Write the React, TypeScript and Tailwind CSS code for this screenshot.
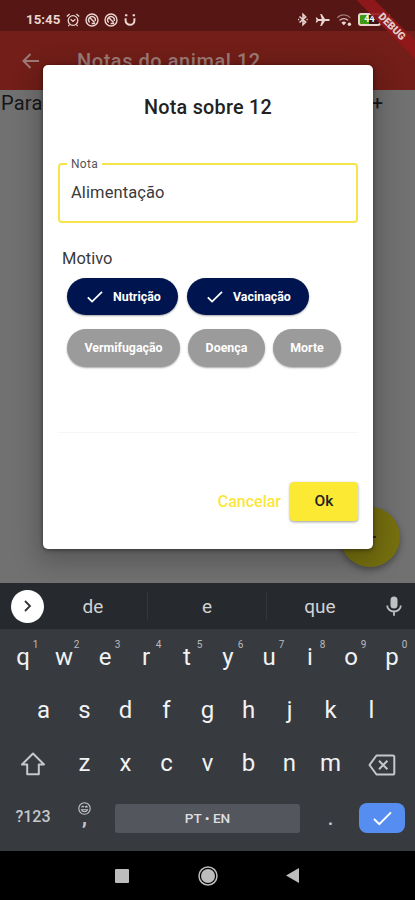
import { clsx } from "clsx";
import type { ReactNode } from "react";

interface Reason {
    label: string;
    selected: boolean;
    size: string;
}

const reasonRows: Reason[][] = [
    [
        { label: "Nutrição", selected: true, size: "w-[111px]" },
        { label: "Vacinação", selected: true, size: "w-[122px]" }
    ],
    [
        { label: "Vermifugação", selected: false, size: "w-[113px]" },
        { label: "Doença", selected: false, size: "w-[77px]" },
        { label: "Morte", selected: false, size: "w-[68px]" }
    ]
];

const topKeys = ["q", "w", "e", "r", "t", "y", "u", "i", "o", "p"];
const middleKeys = ["a", "s", "d", "f", "g", "h", "j", "k", "l"];
const bottomKeys = ["z", "x", "c", "v", "b", "n", "m"];

function NoSoundIcon() {
    return (
        <svg className="h-[14px] w-[14px]" viewBox="0 0 14 14" fill="none" stroke="currentColor">
            <circle cx="7" cy="7" r="6" strokeWidth="1.4" />
            <path d="M4.6 9.4A3.4 3.4 0 1 1 10.2 8M5.2 5l4.4 4.4M6.6 10.5h3.6" strokeWidth="1.4" />
        </svg>
    );
}

function StatusBar() {
    return (
        <div className="flex h-[31px] items-center bg-[#551614] pt-[8px] pl-[26px] text-[#ead5d0]">
            <span className="w-[40px] text-[13.3px] leading-none font-bold">15:45</span>
            <div className="flex items-center gap-[5px]">
                <svg className="h-[14px] w-[14px]" viewBox="0 0 14 14" fill="none" stroke="currentColor" strokeWidth="1.3">
                    <circle cx="7" cy="7.5" r="4.8" />
                    <path d="M.8 3.4 3.6 1M13.2 3.4 10.4 1M4.6 6.3 7 8.4l2.4-2.1M3.6 11.5l-1.2 1.7M10.4 11.5l1.2 1.7" />
                </svg>
                <NoSoundIcon />
                <NoSoundIcon />
                <svg className="h-[14px] w-[14px]" viewBox="0 0 14 14" fill="none" stroke="currentColor" strokeWidth="2">
                    <path d="M2.6 5.2v2.2a4.4 4.4 0 0 0 8.8 0V5.2" />
                    <path d="M2 2.3h2.4M9.6 2.3H12" />
                </svg>
            </div>
            <div className="ml-[160px] flex items-center">
                <svg className="h-[15px] w-[12px]" viewBox="0 0 12 15" fill="none" stroke="currentColor" strokeWidth="1.5">
                    <path d="m2.5 4.5 6.2 5.6L6 12.7V2.3l2.7 2.6-6.2 5.6" />
                    <path d="M1 7.5h1.2M9.5 7.5h1.2" />
                </svg>
                <svg className="ml-[6px] h-[14px] w-[15px]" viewBox="0 0 15 14" fill="currentColor">
                    <path d="M14.8 7c0-.8-.7-1.1-1.4-1.1H10L6.7.9H5.2l1.6 5H3.2L2 4.4H.7L1.5 7 .7 9.6H2l1.2-1.5h3.6l-1.6 5h1.5l3.3-5h3.4c.7 0 1.4-.3 1.4-1.1Z" />
                </svg>
                <svg className="ml-[6px] h-[14px] w-[17px]" viewBox="0 0 17 14" fill="none" stroke="currentColor">
                    <path d="M1.2 4.8a9 9 0 0 1 13.2 0" strokeWidth="1.2" opacity=".5" />
                    <path d="M3.5 7.4a6 6 0 0 1 8.6 0" strokeWidth="1.3" opacity=".85" />
                    <path d="M5.4 9.7a3.5 3.5 0 0 1 4.8 0L7.8 12.2Z" fill="currentColor" stroke="none" />
                    <circle cx="13.4" cy="11.3" r="1.7" fill="currentColor" stroke="none" />
                </svg>
                <div className="ml-[5px] flex h-[13px] w-[23px] items-center justify-center rounded-[3px] border-2 border-[#ead5d0] bg-linear-to-r from-[#3f9a10] from-45% to-[#3b1614] to-45% text-[9px] leading-none font-bold text-white">
                    44
                </div>
                <svg className="ml-[3px] h-[12px] w-[9px]" viewBox="0 0 9 12" fill="currentColor">
                    <path d="M6 0 0 7h3.5L2.5 12 9 4.7H5.2Z" />
                </svg>
            </div>
        </div>
    );
}

function DebugRibbon() {
    return (
        <div className="absolute top-0 right-0 h-[64px] w-[64px] overflow-hidden">
            <div className="absolute top-[20px] left-[-21px] flex h-[13px] w-[124px] rotate-45 items-center justify-center bg-[#93171b]/90 text-[10.5px] font-black text-[#e0cfcc]">
                DEBUG
            </div>
        </div>
    );
}

function ReasonChip({ label, selected, size }: Reason) {
    return (
        <div
            className={clsx(
                "flex items-center rounded-full text-[12.4px] font-bold text-white shadow-[0_1px_2px_rgba(0,0,0,0.35)]",
                selected ? "h-[37px] bg-[#00144f] pt-px pl-[20px]" : "h-[38px] justify-center bg-[#9b9b9b]",
                size
            )}
        >
            {selected && (
                <svg className="mr-[10px] h-[12px] w-[16px] shrink-0" viewBox="0 0 16 12" fill="none" stroke="currentColor" strokeWidth="1.8">
                    <path d="m.8 6.4 4.3 4.2L15 .8" />
                </svg>
            )}
            <span>{label}</span>
        </div>
    );
}

function NoteDialog() {
    return (
        <div className="absolute top-[65px] left-[43px] flex h-[484px] w-[330px] flex-col rounded-[5px] bg-white px-[15px] shadow-[0_8px_26px_6px_rgba(0,0,0,0.22),0_1px_4px_rgba(0,0,0,0.45)]">
            <h2 className="mt-[30px] text-center text-[19.8px] leading-[26px] font-medium tracking-[0.25px] text-[#222]">Nota sobre 12</h2>

            <fieldset className="mt-[34px] h-[68px] rounded-[4px] border-2 border-[#f5e44b] pl-[7px]">
                <legend className="h-[18px] px-[4px] text-[12px] leading-[18px] tracking-[0.3px] text-[#555]">Nota</legend>
                <div className="mt-[9px] pl-[4px] text-[16.5px] leading-[22px] tracking-[0.1px] text-[#3a3a3a]">Alimentação</div>
            </fieldset>

            <div className="mt-[25px] pl-[4px] text-[16.5px] leading-[22px] text-[#3a3a3a]">Motivo</div>

            <div className="mt-[8px] flex flex-col gap-[14px] pl-[9px]">
                {reasonRows.map((row, index) => (
                    <div key={index} className={clsx("flex", index === 0 ? "gap-[9px]" : "gap-[8px]")}>
                        {row.map((reason) => (
                            <ReasonChip key={reason.label} {...reason} />
                        ))}
                    </div>
                ))}
            </div>

            <div className="mt-[65px] border-t border-[#f6f6f6]" />

            <div className="mt-[49px] flex items-center justify-end gap-[9px]">
                <span className="text-[16px] font-medium text-[#fbe63c]">Cancelar</span>
                <div className="flex h-[39px] w-[68px] items-center justify-center rounded-[4px] bg-[#fce934] text-[15.5px] font-medium text-[#222] shadow-[0_1px_3px_rgba(0,0,0,0.4)]">
                    Ok
                </div>
            </div>
        </div>
    );
}

function Key({ children, hint }: { children: ReactNode; hint?: string }) {
    return (
        <div className="relative flex w-[41px] items-center justify-center pb-px text-[24px] leading-none text-[#f1f2f3]">
            {children}
            {hint && <span className="absolute top-[8px] left-[30px] w-[6px] text-center text-[10px] leading-[12px] text-[#b9bbbe]">{hint}</span>}
        </div>
    );
}

function Suggestions() {
    return (
        <div className="flex h-[46px] items-center bg-[#262a2e] text-[19px] text-[#d0d2d4]">
            <div className="ml-[11px] flex h-[33px] w-[33px] items-center justify-center rounded-full bg-white text-[#333]">
                <svg className="h-[12px] w-[8px]" viewBox="0 0 8 12" fill="none" stroke="currentColor" strokeWidth="1.8">
                    <path d="m1 1 5 5-5 5" />
                </svg>
            </div>
            <span className="w-[103px] pt-[2px] pr-[5px] text-center">de</span>
            <span className="h-[28px] w-px bg-[#34383c]" />
            <span className="w-[118px] pt-[2px] text-center">e</span>
            <span className="h-[28px] w-px bg-[#34383c]" />
            <span className="w-[106px] pt-[2px] text-center">que</span>
            <svg className="ml-[13px] h-[22px] w-[16px] text-[#bfc1c3]" viewBox="0 0 16 22" fill="none" stroke="currentColor" strokeWidth="1.8">
                <rect x="4.5" y="1.4" width="7" height="12" rx="3.5" fill="currentColor" stroke="none" />
                <path d="M1.2 10.5a6.8 6 0 0 0 13.6 0M8 16.5v4.2" />
            </svg>
        </div>
    );
}

function Keyboard() {
    return (
        <div className="flex h-[222px] flex-col bg-[#373a3f] pt-px">
            <div className="flex h-[53.5px] justify-center pt-px">
                {topKeys.map((key, index) => (
                    <Key key={key} hint={String((index + 1) % 10)}>{key}</Key>
                ))}
            </div>
            <div className="flex h-[53.5px] justify-center">
                {middleKeys.map((key) => <Key key={key}>{key}</Key>)}
            </div>
            <div className="flex h-[53.5px] items-stretch">
                <div className="flex w-[64px] items-center justify-center pt-px pl-[2px] text-[#c6c8ca]">
                    <svg className="h-[24px] w-[26px]" viewBox="0 0 26 24" fill="none" stroke="currentColor" strokeWidth="2" strokeLinejoin="round">
                        <path d="M13 1.5 2 12.5h5.2v9.7h11.6v-9.7H24Z" />
                    </svg>
                </div>
                {bottomKeys.map((key) => <Key key={key}>{key}</Key>)}
                <div className="flex w-[64px] items-center justify-center pt-[2px] pr-[2px] text-[#c6c8ca]">
                    <svg className="h-[22px] w-[28px]" viewBox="0 0 28 22" fill="none" stroke="currentColor" strokeWidth="2" strokeLinejoin="round">
                        <path d="M8.5 1.5h16.2a1.6 1.6 0 0 1 1.6 1.6v15.8a1.6 1.6 0 0 1-1.6 1.6H8.5L1.5 11Z" />
                        <path d="m11 6.8 8.4 8.4M19.4 6.8 11 15.2" />
                    </svg>
                </div>
            </div>
            <div className="flex h-[53.5px] items-center pt-[2px] text-[#c6c8ca]">
                <span className="w-[66px] pb-[2px] text-center text-[16px] font-medium">?123</span>
                <div className="flex w-[37px] flex-col items-center pb-[6px]">
                    <svg className="h-[13px] w-[13px]" viewBox="0 0 13 13" fill="none" stroke="currentColor" strokeWidth="1.1">
                        <circle cx="6.5" cy="6.5" r="5.7" />
                        <path d="M3.5 7.7a3.2 3.2 0 0 0 6 0ZM3.5 5.2l1.4-1 1.2 1M7 5.2l1.3-1 1.3 1" />
                    </svg>
                    <span className="h-[14px] text-[20px] leading-[4px] font-bold">,</span>
                </div>
                <div className="ml-[12px] flex h-[29px] w-[185px] items-center justify-center rounded-[3px] bg-[#53565d] text-[13.6px] font-medium text-[#dcdee0]">
                    PT • EN
                </div>
                <span className="w-[59px] pl-[2px] text-center text-[20px] leading-none font-medium">.</span>
                <div className="flex h-[30px] w-[46px] items-center justify-center rounded-[8px] bg-[#568df0] text-white">
                    <svg className="h-[15px] w-[19px]" viewBox="0 0 19 15" fill="none" stroke="currentColor" strokeWidth="2">
                        <path d="m1 8 5.3 5.2L18 1.4" />
                    </svg>
                </div>
            </div>
        </div>
    );
}

function NavigationBar() {
    return (
        <div className="flex h-[49px] items-center bg-black pl-[115px] text-[#bdbdbd]">
            <div className="h-[14px] w-[14px] rounded-[1px] bg-[#bdbdbd]" />
            <svg className="ml-[69px] h-[20px] w-[20px]" viewBox="0 0 20 20" fill="none" stroke="currentColor">
                <circle cx="10" cy="10" r="9" strokeWidth="1.5" />
                <circle cx="10" cy="10" r="7" fill="currentColor" stroke="none" />
            </svg>
            <svg className="ml-[68px] h-[15px] w-[13px]" viewBox="0 0 13 15" fill="currentColor">
                <path d="M13 0v15L0 7.5Z" />
            </svg>
        </div>
    );
}

export default function App() {
    return (
        <div className="relative h-[900px] w-[415px] overflow-hidden bg-black font-[Roboto,'Liberation_Sans',sans-serif]">
            <StatusBar />
            <header className="flex h-[59px] items-center bg-[#731e18] pl-[22px] text-[#9d7c78]">
                <svg className="h-[16px] w-[17px]" viewBox="0 0 17 16" fill="none" stroke="currentColor" strokeWidth="2">
                    <path d="M17 8H1.6M8.5 1 1.5 8l7 7" />
                </svg>
                <h1 className="ml-[38px] text-[20px] font-medium tracking-[0.55px]">Notas do animal 12</h1>
            </header>
            <main className="relative h-[493px] bg-[#717171] text-[20px] text-[#161616]">
                <div className="flex justify-between pr-[32px] pl-px leading-[26px]">
                    <span className="tracking-[0.2px]">Para</span>
                    <span>+</span>
                </div>
                <div className="absolute right-[15px] bottom-[16px] flex h-[60px] w-[60px] items-center justify-center rounded-full bg-[#76700f] shadow-[0_3px_6px_rgba(0,0,0,0.35)]">
                    <svg className="h-[12px] w-[12px]" viewBox="0 0 14 14" stroke="currentColor" strokeWidth="2">
                        <path d="M7 0v14M0 7h14" />
                    </svg>
                </div>
            </main>
            <NoteDialog />
            <DebugRibbon />
            <div className="relative">
                <Suggestions />
                <Keyboard />
                <NavigationBar />
            </div>
        </div>
    );
}
